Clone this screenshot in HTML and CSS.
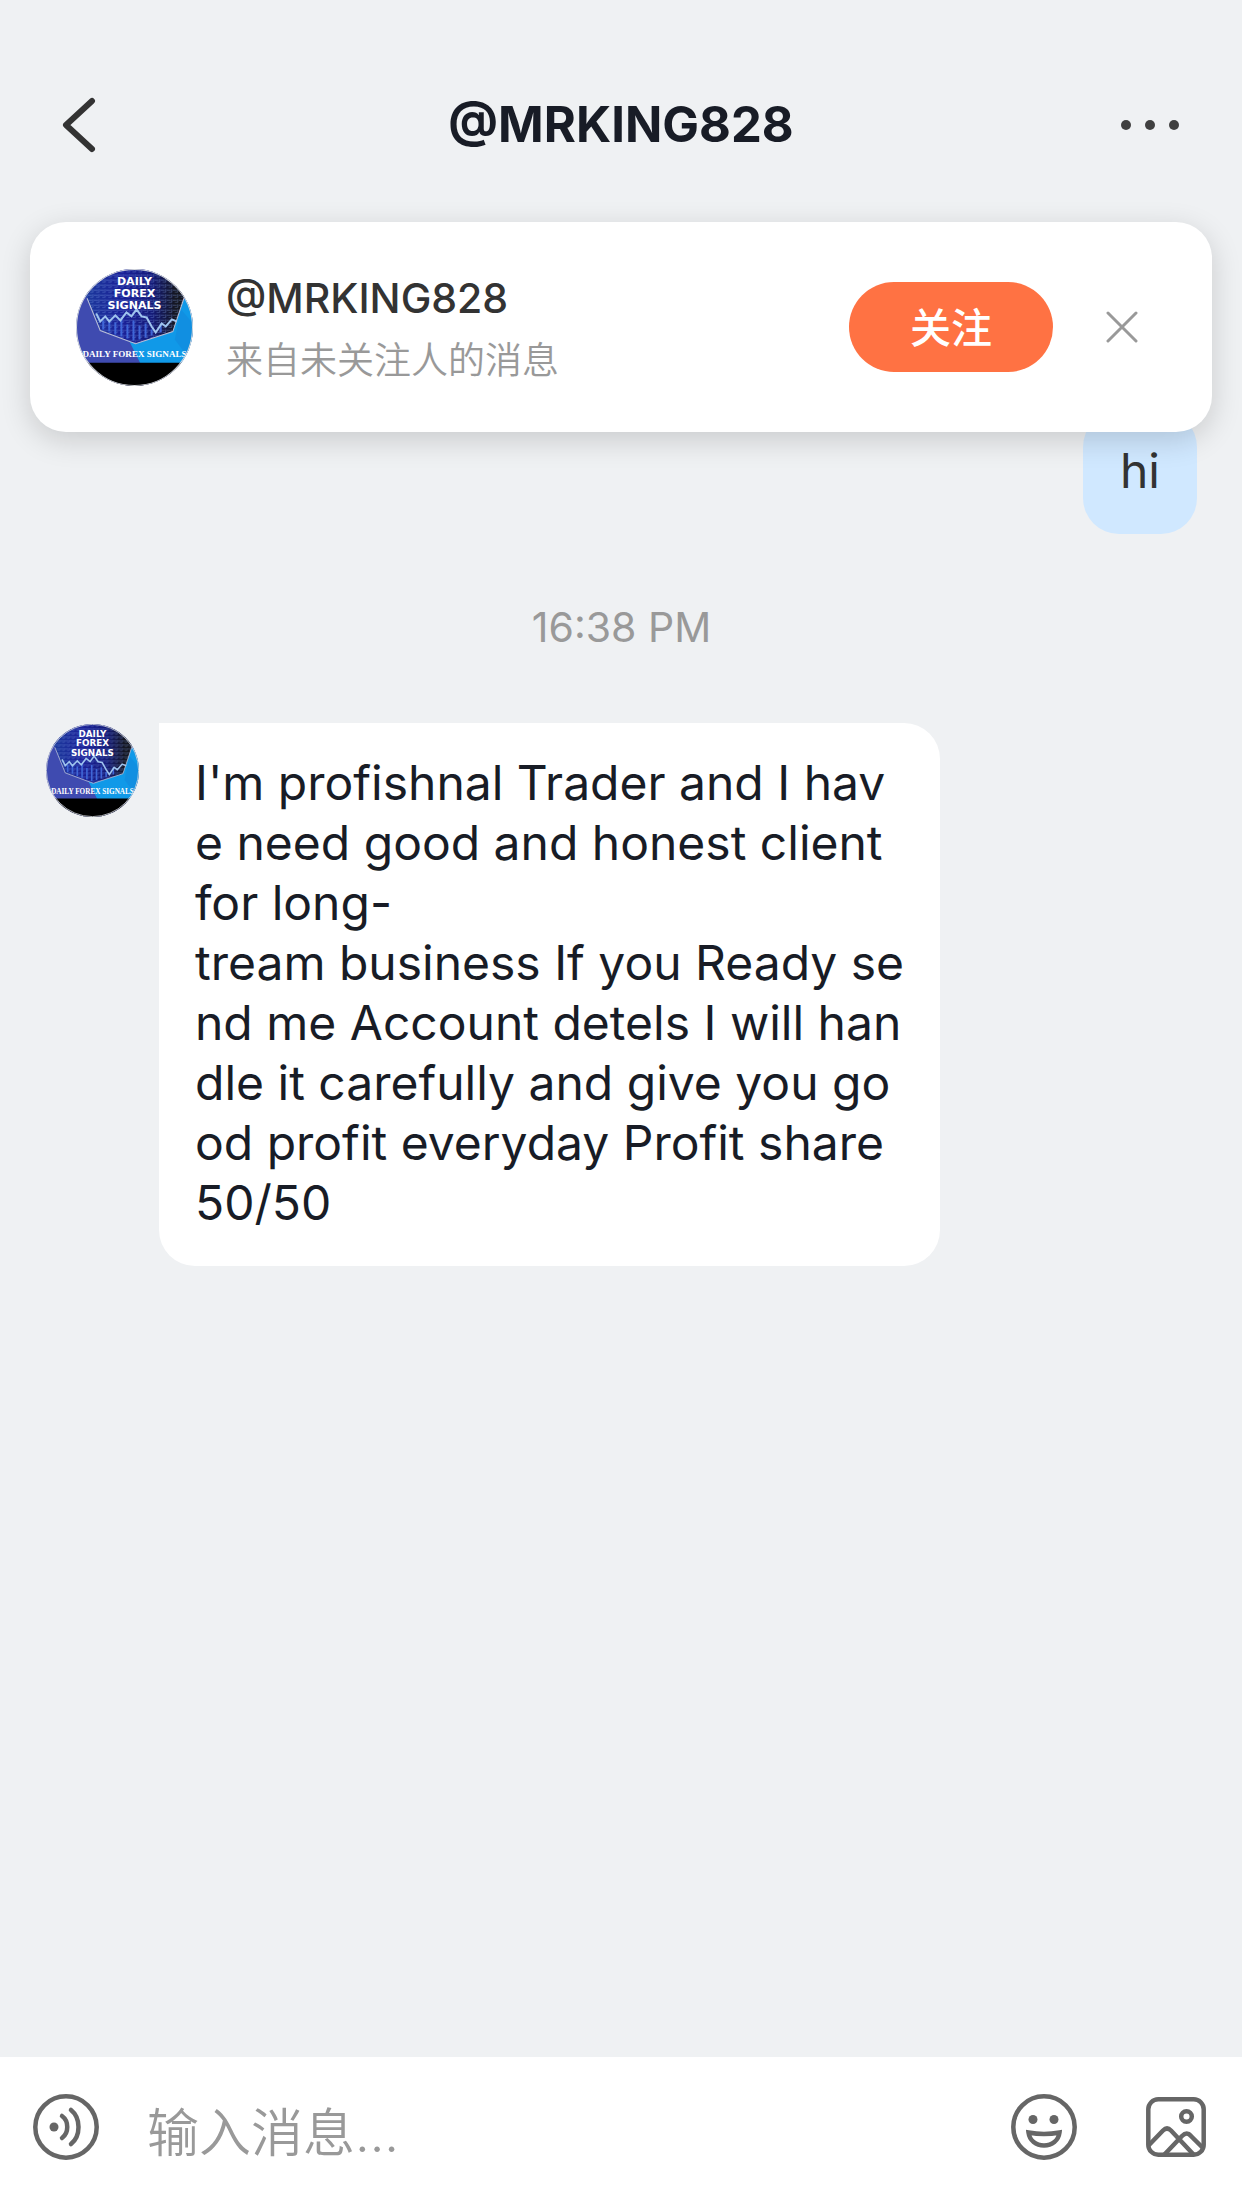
FILE: index.html
```
<!DOCTYPE html>
<html lang="zh-CN">
<head>
    <meta charset="UTF-8">
    <meta name="viewport" content="width=device-width, initial-scale=1.0">
    <title>@MRKING828</title>
    <link rel="stylesheet" href="styles.css">
</head>
<body>

<div class="app">
  <header class="topbar">
    <button class="icon-btn" aria-label="返回">
      <svg width="36" height="56" viewBox="0 0 36 56"><path d="M30 4L4 28l26 24" fill="none" stroke="#333" stroke-width="6" stroke-linecap="round" stroke-linejoin="round"/></svg>
    </button>
    <h1>@MRKING828</h1>
    <button class="icon-btn" aria-label="更多">
      <svg width="60" height="12" viewBox="0 0 60 12" fill="#404040"><circle cx="6" cy="6" r="5"/><circle cx="30" cy="6" r="5"/><circle cx="54" cy="6" r="5"/></svg>
    </button>
  </header>

  <main class="chat">
    <section class="notice">
      <svg class="notice-avatar" viewBox="0 0 116 116" role="img" aria-label="@MRKING828">
        <defs>
          <linearGradient id="chart-bg" x1="0" y1="0" x2="1" y2="0">
            <stop offset="0" stop-color="#1c3f9c"/>
            <stop offset="0.4" stop-color="#1a2098"/>
            <stop offset="0.65" stop-color="#141a78"/>
            <stop offset="0.85" stop-color="#14161f"/>
          </linearGradient>
          <pattern id="chart-grid" width="6" height="5" patternUnits="userSpaceOnUse">
            <path d="M0 1h4M5 0v3M2 3h3" stroke="#7f9fe8" stroke-width="0.7" opacity="0.5"/>
          </pattern>
          <clipPath id="round"><circle cx="58" cy="58" r="58"/></clipPath>
        </defs>
        <!-- Reused by the message avatar -->
        <g id="avatar">
          <g clip-path="url(#round)">
            <path fill="#3f4bb0" d="M0 0h116v116H0z"/>
            <path fill="#1099e8" d="M116 24v70H64L52 70z"/>
            <path fill="#1388dc" d="M104 40l12 14v40l-18-24z" opacity="0.6"/>
            <path fill="url(#chart-bg)" d="M0 0h116v12l-9 17-11 33-37 12-35-13L11 29 0 12z"/>
            <path fill="url(#chart-grid)" d="M0 0h116v12l-9 17-11 33-37 12-35-13L11 29 0 12z"/>
            <path fill="none" stroke="#3f66d8" stroke-width="2" d="M27 60v-9M33 62V50M39 65V53M45 67V49M51 69V55M57 71V51M63 70V56M69 68V54M75 66V60M84 63v-9"/>
            <path fill="none" stroke="#9fc4ee" stroke-width="2" d="M20 44l4 8 5-5 4 5 6-6 5 5 6-8 5 4 5-7 5 7 5 1 5 9 4 6 6-9 4 3 6-7 5 2"/>
            <path fill="none" stroke="#b8bfd8" d="M11 29l13 32 35 13 37-12 11-33"/>
            <path d="M0 93h116v23H0z"/>
            <g fill="#fff" text-anchor="middle">
              <g class="avatar-sans">
                <text x="58" y="16">DAILY</text>
                <text x="58" y="28">FOREX</text>
                <text x="58" y="40">SIGNALS</text>
              </g>
              <text class="avatar-serif" x="58" y="87">DAILY FOREX SIGNALS</text>
            </g>
          </g>
          <circle cx="58" cy="58" r="57.5" fill="none" stroke="#d5d8dc"/>
        </g>
      </svg>
      <div class="notice-text">
        <h2>@MRKING828</h2>
        <p>来自未关注人的消息</p>
      </div>
      <button class="follow">关注</button>
      <button class="icon-btn" aria-label="关闭">
        <svg width="32" height="32" viewBox="0 0 32 32"><path d="M2 2l28 28M30 2L2 30" stroke="#999" stroke-width="3" stroke-linecap="round"/></svg>
      </button>
    </section>

    <div class="message sent">
      <p class="bubble">hi</p>
    </div>

    <time>16:38 PM</time>

    <div class="message received">
      <svg class="message-avatar" viewBox="0 0 116 116" role="img" aria-label="@MRKING828"><use href="#avatar"/></svg>
      <p class="bubble">I'm profishnal Trader and I hav<br>e need good and honest client<br>for long-<br>tream business If you Ready se<br>nd me Account detels I will han<br>dle it carefully and give you go<br>od profit everyday Profit share<br>50/50</p>
    </div>
  </main>

  <form class="composer">
    <button type="button" class="icon-btn" aria-label="语音">
      <svg width="66" height="66" viewBox="0 0 66 66" fill="none" stroke="#666" stroke-width="4.5" stroke-linecap="round">
        <circle cx="33" cy="33" r="30.7"/>
        <circle cx="21" cy="33" r="4.5" fill="#666" stroke="none"/>
        <path d="M29 22c7 5 7 17 0 22M38 16c10 8 10 26 0 34"/>
      </svg>
    </button>
    <input type="text" placeholder="输入消息..." aria-label="输入消息">
    <button type="button" class="icon-btn" aria-label="表情">
      <svg width="66" height="66" viewBox="0 0 66 66" fill="none" stroke="#666" stroke-width="4.5">
        <circle cx="33" cy="33" r="30.7"/>
        <circle cx="22" cy="25.5" r="4.5" fill="#666" stroke="none"/>
        <circle cx="43" cy="25.5" r="4.5" fill="#666" stroke="none"/>
        <path d="M17.5 38.5q15.5 3 31 0c-1 8-7.5 13-15.5 13s-14.5-5-15.5-13z"/>
      </svg>
    </button>
    <button type="button" class="icon-btn" aria-label="图片">
      <svg width="60" height="60" viewBox="0 0 60 60" fill="none" stroke="#666" stroke-width="4.5">
        <rect x="2.3" y="2.3" width="55.4" height="55.4" rx="10"/>
        <circle cx="40.5" cy="19.5" r="5.3"/>
        <path d="M3 48l14-14.5q4-4 8 0L48 58M18 58l18-19q5-5 9 0l12 12"/>
      </svg>
    </button>
  </form>
</div>

</body>
</html>
```
FILE: styles.css
```
* { box-sizing: border-box }

body {
  margin: 0;
  background: #eff1f3;
  color: #181c26;
  font-family: Inter, "Noto Sans CJK SC", sans-serif;
}

h1, h2, p {
  margin: 0;
}

button {
  border: 0;
  padding: 0;
  background: transparent;
  font-family: inherit;
  cursor: pointer;
}

.icon-btn {
  display: flex;
  flex: none;
}

.app {
  display: flex;
  flex-direction: column;
  min-height: 100vh;
}

/* Top bar */

.topbar {
  display: grid;
  grid-template-columns: 1fr auto 1fr;
  align-items: center;
  height: 200px;
  padding: 49px 62px 0;
}

.topbar h1 {
  font-size: 49px;
  font-weight: 700;
  line-height: 60px;
}

.topbar .icon-btn:last-child {
  justify-self: end;
}

/* Chat */

.chat {
  flex: 1;
  position: relative;
  padding: 211px 45px 60px 46px;
}

.notice {
  position: absolute;
  top: 22px;
  left: 30px;
  right: 30px;
  display: flex;
  align-items: center;
  height: 210px;
  padding: 0 74px 0 46px;
  background: #fff;
  border-radius: 36px;
  box-shadow: 0 8px 30px rgba(0, 0, 0, 0.16);
}

.notice-avatar {
  width: 117px;
  height: 117px;
}

.notice-text {
  flex: 1;
  margin-left: 33px;
  padding-top: 8px;
}

.notice-text h2 {
  color: #333;
  font-size: 41px;
  font-weight: 500;
  line-height: 60px;
}

.notice-text p {
  color: #999;
  font-size: 37px;
  font-weight: 350;
  line-height: 66px;
}

.follow {
  width: 204px;
  height: 90px;
  margin-right: 53px;
  padding-bottom: 4px;
  border-radius: 45px;
  background: #ff7243;
  color: #fff;
  font-size: 41px;
  font-weight: 500;
}

.message {
  display: flex;
  align-items: flex-start;
}

.sent {
  justify-content: flex-end;
}

.message-avatar {
  flex: none;
  width: 93px;
  height: 93px;
  margin: 1px 20px 0 0;
}

.bubble {
  padding: 30px 36px 33px;
  border-radius: 36px;
  background: #fff;
  font-size: 48px;
  line-height: 60px;
}

.sent .bubble {
  min-width: 114px;
  background: #d0e8ff;
  color: #333;
  text-align: center;
}

.received .bubble {
  border-top-left-radius: 0;
}

.chat time {
  display: block;
  margin: 63px 0 66px;
  color: #999;
  font-size: 41px;
  line-height: 60px;
  text-align: center;
}

/* Message box */

.composer {
  display: flex;
  align-items: center;
  height: 151px;
  padding: 0 36px 11px 33px;
  background: #fff;
}

.composer input {
  flex: 1;
  min-width: 0;
  height: 100px;
  margin: 0 48px;
  padding: 12px 0 0;
  border: 0;
  outline: none;
  background: transparent;
  color: #333;
  font-family: inherit;
  font-size: 52px;
  font-weight: 350;
}

.composer input::placeholder {
  color: #999;
  opacity: 1;
}

.composer .icon-btn:last-child {
  margin-left: 69px;
}

/* Avatar lettering */

.avatar-sans {
  font-family: "DejaVu Sans", sans-serif;
  font-size: 11px;
  font-weight: 700;
}

.avatar-serif {
  font-family: "Liberation Serif", serif;
  font-size: 9px;
  font-weight: 700;
}
```
